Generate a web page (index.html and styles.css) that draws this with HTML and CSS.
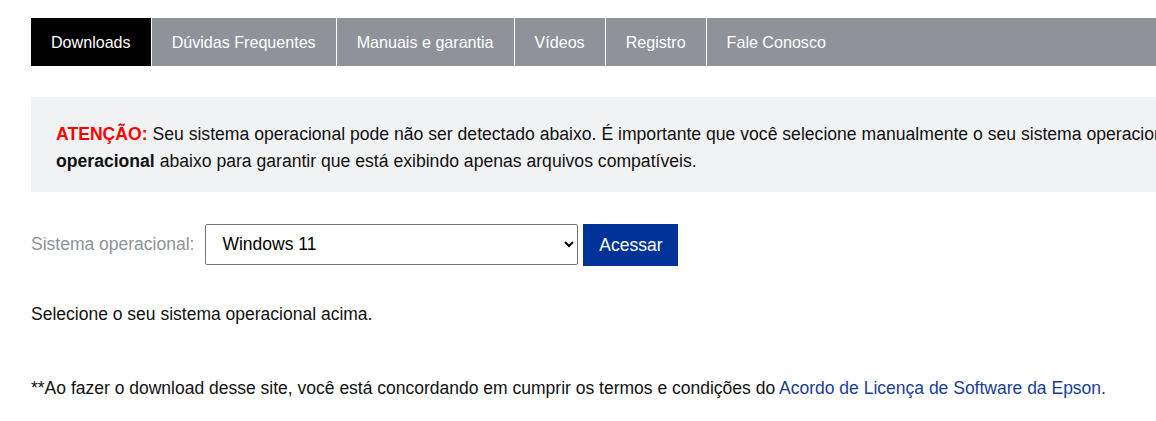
FILE: index.html
```html
<!DOCTYPE html>
<html lang="pt-BR">
<head>
<meta charset="utf-8">
<title>Downloads</title>
<link rel="stylesheet" href="styles.css">
</head>
<body>
<div class="page">
  <nav class="tabs">
    <a class="tab active">Downloads</a>
    <a class="tab">Dúvidas Frequentes</a>
    <a class="tab">Manuais e garantia</a>
    <a class="tab">Vídeos</a>
    <a class="tab">Registro</a>
    <a class="tab">Fale Conosco</a>
  </nav>
  <div class="alert">
    <p><span class="warn">ATENÇÃO:</span> Seu sistema operacional pode não ser detectado abaixo. É importante que você selecione manualmente o seu sistema operacional na lista <b>Sistema</b><br><b>operacional</b> abaixo para garantir que está exibindo apenas arquivos compatíveis.</p>
  </div>
  <form class="os-row">
    <label class="os-label" for="os">Sistema operacional:</label>
    <select id="os" class="os-select">
      <option>Windows 11</option>
      <option>Windows 10</option>
    </select>
    <button type="button" class="btn">Acessar</button>
  </form>
  <p class="hint">Selecione o seu sistema operacional acima.</p>
  <p class="terms">**Ao fazer o download desse site, você está concordando em cumprir os termos e condições do <a class="link">Acordo de Licença de Software da Epson.</a></p>
</div>
</body>
</html>
```
FILE: styles.css
```css
html, body {
  margin: 0;
  padding: 0;
  overflow: hidden;
  background: #fff;
}
body {
  font-family: "Liberation Sans", Arial, sans-serif;
  color: #111;
}
.page {
  padding: 18px 0 0 31px;
  width: 1600px;
}
.tabs {
  display: flex;
  height: 48px;
  background: #8f9299;
}
.tab {
  display: flex;
  align-items: center;
  padding: 0 20px;
  color: #fff;
  font-size: 16.1px;
  border-right: 1px solid #fff;
}
.tab:last-child {
  border-right: 0;
}
.tab.active {
  background: #000;
}
.alert {
  margin-top: 31px;
  background: #f1f2f4;
  padding: 24px 25px 17px;
}
.alert p {
  margin: 0;
  font-size: 17.6px;
  line-height: 27px;
  color: #111;
}
.warn {
  color: #f00;
  font-weight: bold;
}
.os-row {
  display: flex;
  align-items: center;
  margin: 30px 0 0;
}
.os-label {
  color: #8f9299;
  font-size: 17.5px;
  margin-right: 11px;
}
.os-select {
  width: 373px;
  height: 41px;
  border: 1px solid #767676;
  border-radius: 2px;
  background: #fff;
  font-family: "Liberation Sans", Arial, sans-serif;
  font-size: 17.5px;
  color: #000;
  padding: 0 8px 0 12px;
}
.btn {
  margin-left: 5px;
  width: 95px;
  height: 42px;
  margin-top: 2px;
  border: 0;
  background: #003399;
  color: #fff;
  font-family: "Liberation Sans", Arial, sans-serif;
  font-size: 17.5px;
}
.hint {
  margin: 38px 0 0;
  font-size: 17.5px;
  line-height: 20px;
  color: #111;
}
.terms {
  margin: 54px 0 0;
  font-size: 17.5px;
  line-height: 20px;
  color: #111;
}
.link {
  color: #1a3d99;
}
```
